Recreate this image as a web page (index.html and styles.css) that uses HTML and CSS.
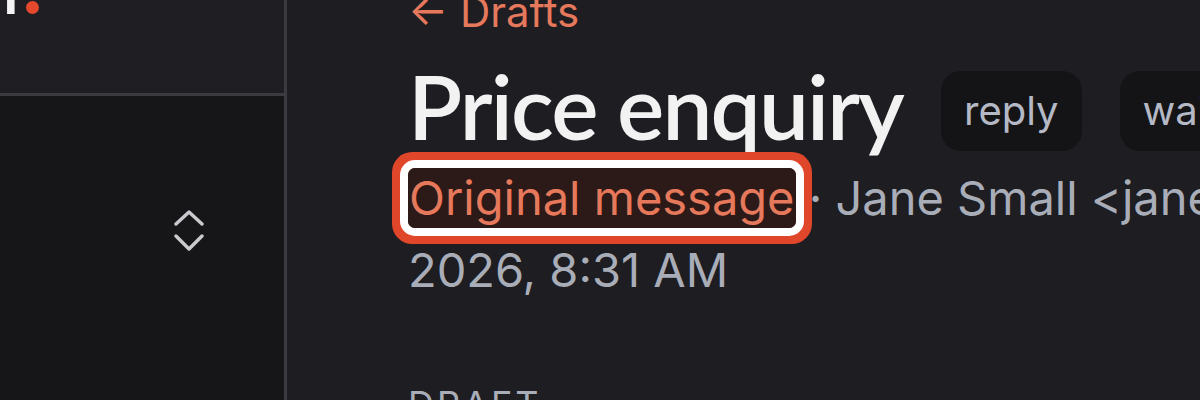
FILE: index.html
```html
<!DOCTYPE html>
<html lang="en">
<head>
<meta charset="utf-8">
<title>Price enquiry</title>
<link rel="stylesheet" href="styles.css">
</head>
<body>
<div class="app">
  <aside class="sidebar">
    <div class="sidebar-head">
      <span class="logo">r<span class="logo-dot"></span></span>
    </div>
    <div class="sidebar-body">
      <div class="select-row">
        <svg class="chevrons" width="30" height="42" viewBox="0 0 30 42" aria-hidden="true">
          <path d="M2 14 L15 2 L28 14" fill="none" stroke="#c9c9ce" stroke-width="3.4" stroke-linecap="round" stroke-linejoin="round"/>
          <path d="M2 26 L15 39 L28 26" fill="none" stroke="#c9c9ce" stroke-width="3.4" stroke-linecap="round" stroke-linejoin="round"/>
        </svg>
      </div>
    </div>
  </aside>
  <main class="main">
    <a class="back" href="#">← Drafts</a>
    <div class="title-row">
      <h1 class="title">Price enquiry</h1>
      <span class="chip">reply</span>
      <span class="chip">waiting</span>
    </div>
    <p class="meta"><span class="nowrap"><a class="orig" href="#">Original message</a> · Jane Small &lt;jane@smallbakery.co.uk&gt; · Thu, 12 Mar</span> <span>2026, 8:31 AM</span></p>
    <div class="section-label">DRAFT</div>
  </main>
</div>
</body>
</html>
```
FILE: styles.css
```css
* { box-sizing: border-box; }
html, body {
  margin: 0;
  height: 400px;
  overflow: hidden;
  background: #1d1d22;
  font-family: "Inter", "Liberation Sans", sans-serif;
}
.app {
  display: flex;
  height: 400px;
}
.sidebar {
  width: 287px;
  flex: none;
  border-right: 3px solid #3a3a40;
  display: flex;
  flex-direction: column;
  background: #161618;
}
.sidebar-head {
  height: 96px;
  flex: none;
  background: #1e1e23;
  border-bottom: 3px solid #3a3a40;
  padding-left: 4px;
  display: flex;
  align-items: flex-start;
  overflow: hidden;
}
.logo {
  font-family: "Lato", sans-serif;
  font-weight: 900;
  font-size: 54px;
  line-height: 1;
  color: #f4f4f4;
  margin-top: -33px;
}
.logo-dot {
  display: inline-block;
  width: 13px;
  height: 13px;
  border-radius: 50%;
  background: #e5492d;
  margin-left: 2px;
}
.sidebar-body {
  flex: 1;
  padding-top: 114px;
}
.select-row {
  display: flex;
  justify-content: flex-end;
  padding-right: 80px;
}
.chevrons { display: block; }
.main {
  flex: 1;
  min-width: 0;
  padding-left: 121px;
}
.back {
  display: block;
  font-size: 42px;
  line-height: 63px;
  margin-top: -20px;
  color: #e6785b;
  text-decoration: none;
}
.title-row {
  display: flex;
  align-items: center;
  gap: 38px;
  margin-top: 10px;
  white-space: nowrap;
}
.title {
  margin: 0;
  font-family: "Lato", sans-serif;
  font-weight: 600;
  font-size: 89px;
  line-height: 1.2;
  color: #f2f2f2;
  letter-spacing: -1.8px;
}
.chip {
  flex: none;
  height: 80px;
  margin-top: 10px;
  padding: 0 23px;
  border-radius: 20px;
  background: #141417;
  color: #b5b9c5;
  font-size: 40px;
  line-height: 80px;
}
.meta {
  margin: 2px 0 0;
  font-size: 47px;
  line-height: 72px;
  color: #a9adb8;
}
.nowrap { white-space: nowrap; }
.orig {
  color: #e6785b;
  text-decoration: none;
  background: #2b1a17;
  border-radius: 7px;
  padding: 1px 1px 2px;
  box-shadow: 0 0 0 8px #ffffff, 0 0 0 16px #e0462a;
}
.section-label {
  margin-top: 76px;
  font-size: 36px;
  letter-spacing: 3px;
  color: #a9adb8;
}
```
